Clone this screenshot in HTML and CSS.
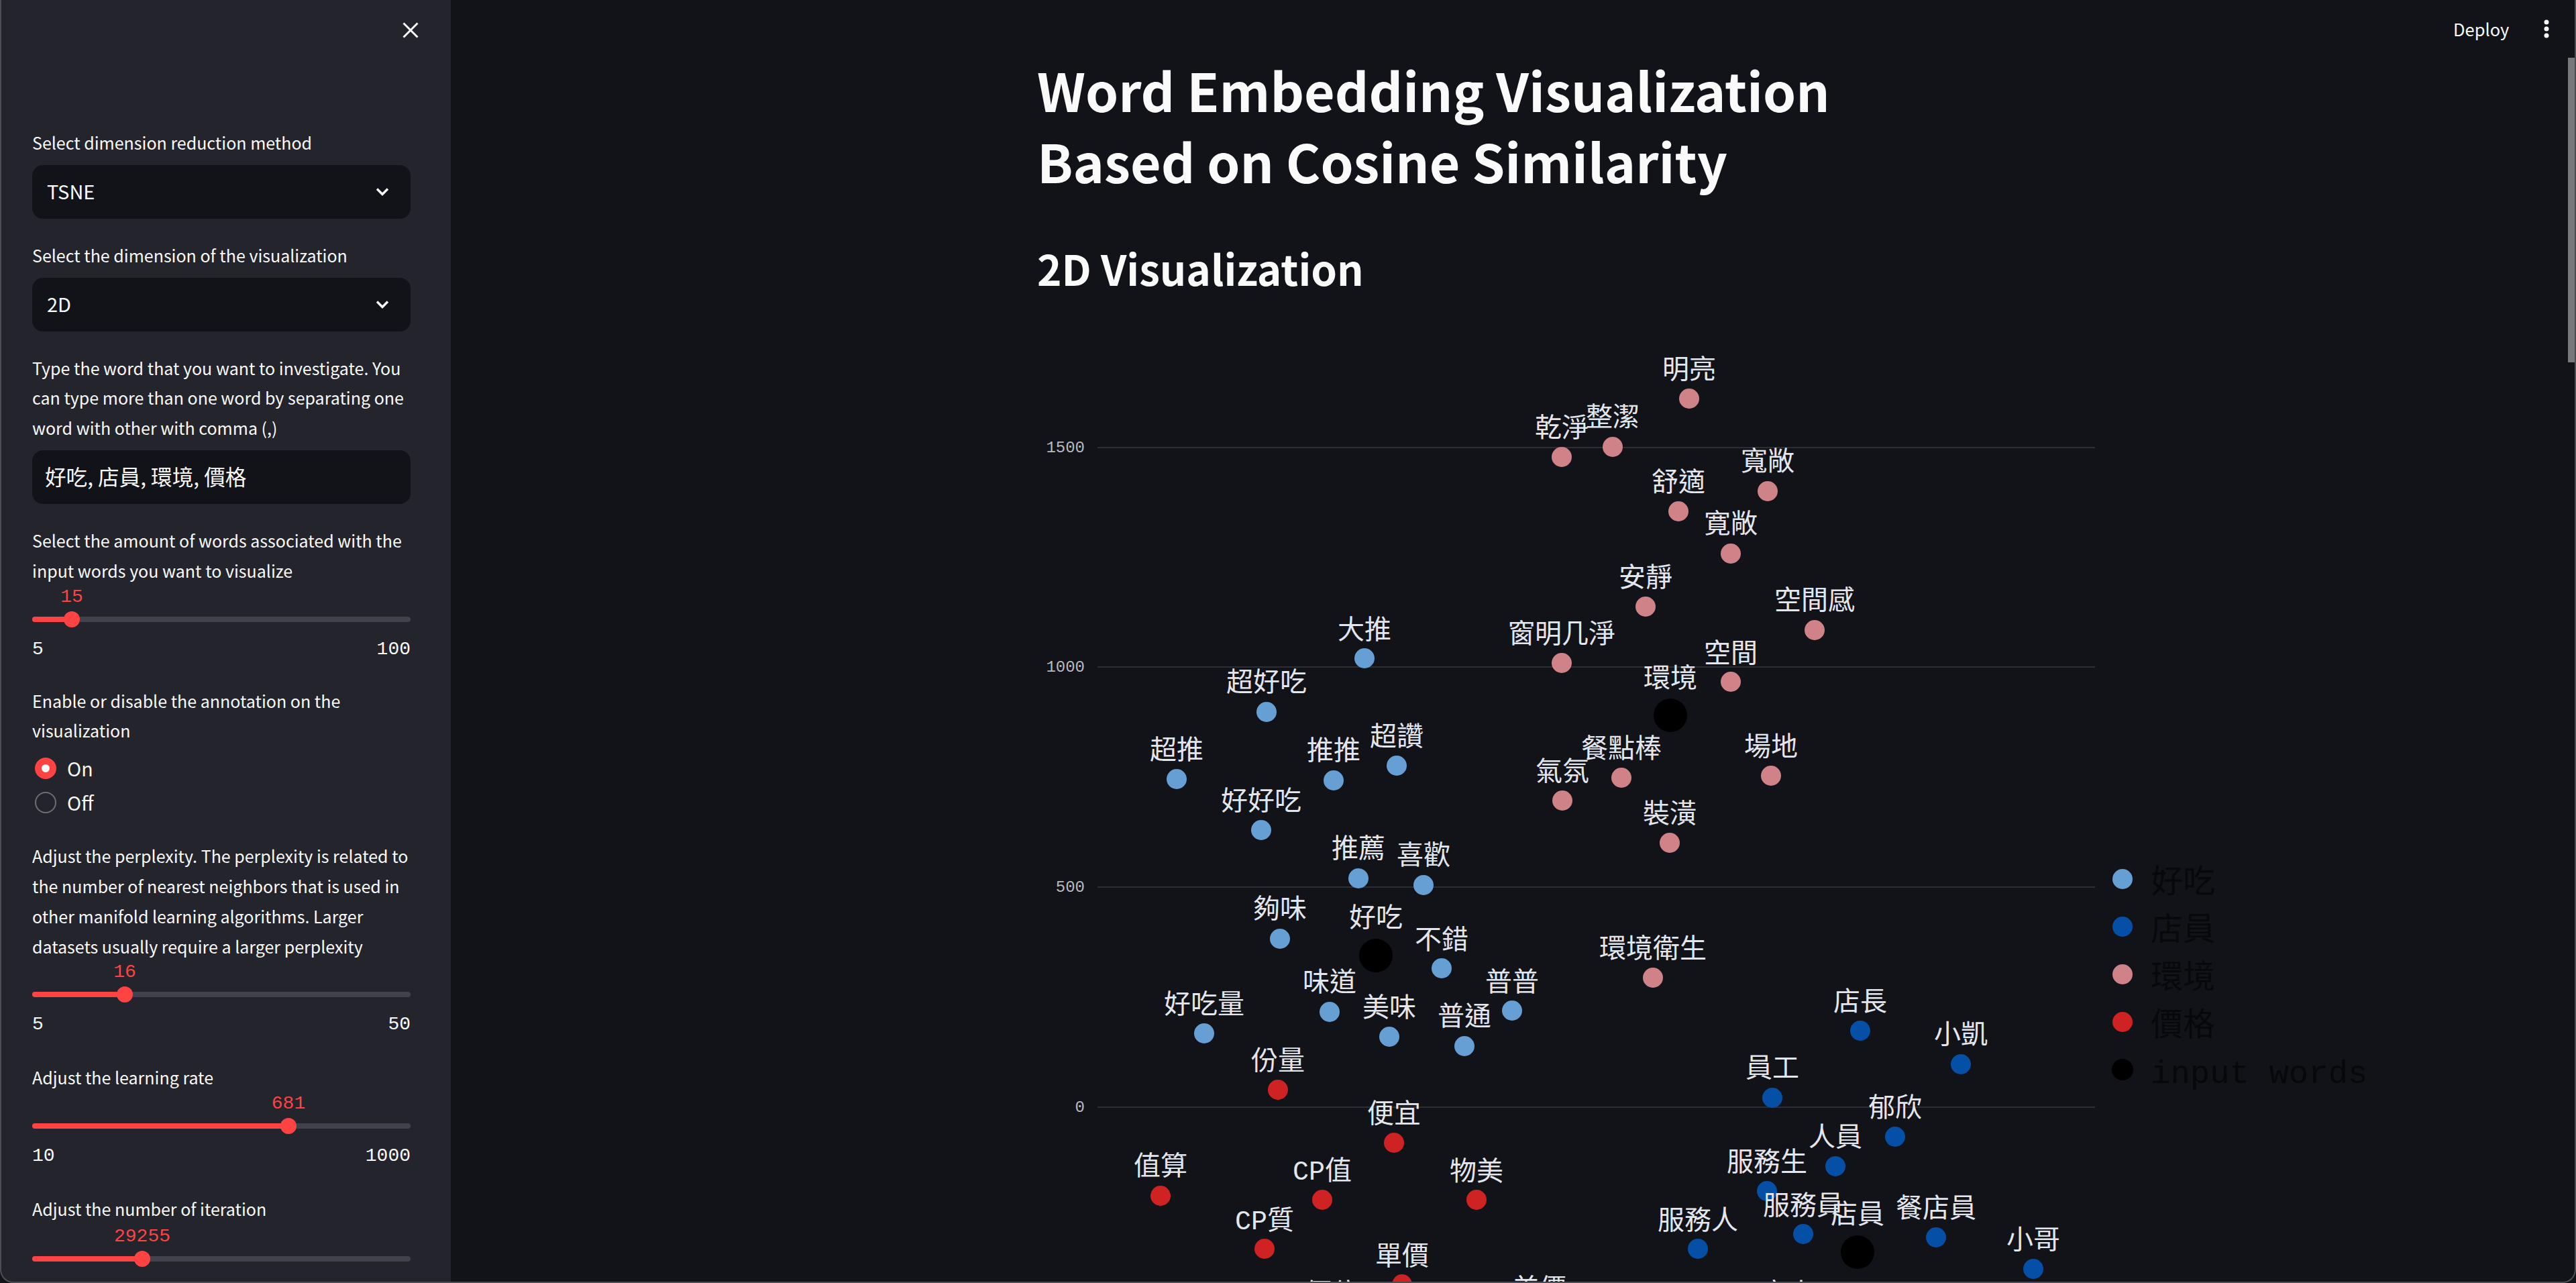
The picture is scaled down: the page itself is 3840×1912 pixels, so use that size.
FILE: index.html
```html
<!DOCTYPE html>
<html lang="zh-Hant">
<head>
<meta charset="utf-8">
<title>Word Embedding Visualization</title>
<link rel="stylesheet" href="styles.css">
</head>
<body>
<div class="app">
  <aside class="sidebar">
    <div class="side-head">
      <svg class="close" viewBox="0 0 24 24"><path d="M1.5 1.5 22.5 22.5M22.5 1.5 1.5 22.5"/></svg>
    </div>
    <div class="widgets">
      <div class="widget">
        <label class="lab">Select dimension reduction method</label>
        <div class="select"><span>TSNE</span><svg class="chev" viewBox="0 0 20 13"><path d="M2 2.5 10 10.5 18 2.5"/></svg></div>
      </div>
      <div class="widget">
        <label class="lab">Select the dimension of the visualization</label>
        <div class="select"><span>2D</span><svg class="chev" viewBox="0 0 20 13"><path d="M2 2.5 10 10.5 18 2.5"/></svg></div>
      </div>
      <div class="widget">
        <label class="lab">Type the word that you want to investigate. You can type more than one word by separating one word with other with comma (,)</label>
        <div class="input">好吃, 店員, 環境, 價格</div>
      </div>
      <div class="widget">
        <label class="lab tight">Select the amount of words associated with the input words you want to visualize</label>
        <div class="slider first">
          <span class="val" style="left:59px">15</span>
          <div class="track"><div class="fill" style="width:59px"></div><div class="thumb" style="left:59px"></div></div>
          <div class="ticks"><span>5</span><span>100</span></div>
        </div>
      </div>
      <div class="widget">
        <label class="lab tight">Enable or disable the annotation on the visualization</label>
        <div class="radios">
          <div class="radio"><span class="dot on"></span><span>On</span></div>
          <div class="radio"><span class="dot"></span><span>Off</span></div>
        </div>
      </div>
      <div class="widget">
        <label class="lab tight">Adjust the perplexity. The perplexity is related to the number of nearest neighbors that is used in other manifold learning algorithms. Larger datasets usually require a larger perplexity</label>
        <div class="slider">
          <span class="val" style="left:138px">16</span>
          <div class="track"><div class="fill" style="width:138px"></div><div class="thumb" style="left:138px"></div></div>
          <div class="ticks"><span>5</span><span>50</span></div>
        </div>
      </div>
      <div class="widget">
        <label class="lab tight">Adjust the learning rate</label>
        <div class="slider">
          <span class="val" style="left:382px">681</span>
          <div class="track"><div class="fill" style="width:382px"></div><div class="thumb" style="left:382px"></div></div>
          <div class="ticks"><span>10</span><span>1000</span></div>
        </div>
      </div>
      <div class="widget">
        <label class="lab tight">Adjust the number of iteration</label>
        <div class="slider last">
          <span class="val" style="left:164px">29255</span>
          <div class="track"><div class="fill" style="width:164px"></div><div class="thumb" style="left:164px"></div></div>
          <div class="ticks"><span>250</span><span>100000</span></div>
        </div>
      </div>
    </div>
  </aside>
  <main class="main">
    <div class="content">
      <h1>Word Embedding Visualization<br>Based on Cosine Similarity</h1>
      <h2>2D Visualization</h2>
      <svg class="chart" viewBox="1546 480 2290 1440">
        <g class="grid">
          <path d="M1636 667H3123M1636 994H3123M1636 1322H3123M1636 1650H3123"/>
        </g>
        <g class="ytick">
          <text x="1617" y="667">1500</text>
          <text x="1617" y="994">1000</text>
          <text x="1617" y="1322">500</text>
          <text x="1617" y="1650">0</text>
        </g>
        <g class="pts env">
          <circle cx="2518" cy="594"/><circle cx="2404" cy="666"/><circle cx="2328" cy="681"/><circle cx="2635" cy="732"/>
          <circle cx="2502" cy="762"/><circle cx="2580" cy="825"/><circle cx="2453" cy="904"/><circle cx="2705" cy="939"/>
          <circle cx="2328" cy="988"/><circle cx="2580" cy="1016"/><circle cx="2640" cy="1156"/><circle cx="2417" cy="1159"/>
          <circle cx="2329" cy="1193"/><circle cx="2489" cy="1256"/><circle cx="2464" cy="1457"/>
        </g>
        <g class="pts food">
          <circle cx="2034" cy="981"/><circle cx="1888" cy="1061"/><circle cx="2082" cy="1141"/><circle cx="1754" cy="1161"/>
          <circle cx="1988" cy="1163"/><circle cx="1880" cy="1237"/><circle cx="2025" cy="1309"/><circle cx="2122" cy="1319"/>
          <circle cx="1908" cy="1399"/><circle cx="2149" cy="1443"/><circle cx="2254" cy="1506"/><circle cx="1982" cy="1508"/>
          <circle cx="1795" cy="1540"/><circle cx="2071" cy="1545"/><circle cx="2183" cy="1559"/>
        </g>
        <g class="pts staff">
          <circle cx="2773" cy="1536"/><circle cx="2923" cy="1586"/><circle cx="2642" cy="1636"/><circle cx="2825" cy="1694"/>
          <circle cx="2736" cy="1738"/><circle cx="2634" cy="1775"/><circle cx="2688" cy="1839"/><circle cx="2886" cy="1844"/>
          <circle cx="2531" cy="1861"/><circle cx="3031" cy="1891"/>
        </g>
        <g class="pts price">
          <circle cx="1905" cy="1624"/><circle cx="2078" cy="1703"/><circle cx="1730" cy="1782"/><circle cx="1971" cy="1788"/>
          <circle cx="2201" cy="1788"/><circle cx="1885" cy="1861"/><circle cx="2090" cy="1914"/>
        </g>
        <g class="pts input">
          <circle cx="2490" cy="1066"/><circle cx="2051" cy="1424"/><circle cx="2769" cy="1866"/>
        </g>
        <g class="labels">
          <text x="2518" y="549">明亮</text><text x="2404" y="620">整潔</text><text x="2328" y="636">乾淨</text><text x="2635" y="686">寬敞</text>
          <text x="2502" y="717">舒適</text><text x="2580" y="779">寛敞</text><text x="2453" y="859">安靜</text><text x="2705" y="893">空間感</text>
          <text x="2328" y="943">窗明几淨</text><text x="2580" y="972">空間</text><text x="2490" y="1009">環境</text><text x="2640" y="1111">場地</text>
          <text x="2417" y="1114">餐點棒</text><text x="2329" y="1148">氣氛</text><text x="2489" y="1211">裝潢</text><text x="2464" y="1412">環境衛生</text>
          <text x="2034" y="937">大推</text><text x="1888" y="1015">超好吃</text><text x="2082" y="1096">超讚</text><text x="1754" y="1116">超推</text>
          <text x="1988" y="1117">推推</text><text x="1880" y="1192">好好吃</text><text x="2025" y="1263">推薦</text><text x="2122" y="1273">喜歡</text>
          <text x="1908" y="1353">夠味</text><text x="2051" y="1366">好吃</text><text x="2149" y="1399">不錯</text><text x="2254" y="1462">普普</text>
          <text x="1982" y="1462">味道</text><text x="1795" y="1495">好吃量</text><text x="2071" y="1500">美味</text><text x="2183" y="1513">普通</text>
          <text x="2773" y="1491">店長</text><text x="2923" y="1540">小凱</text><text x="2642" y="1590">員工</text><text x="2825" y="1649">郁欣</text>
          <text x="2736" y="1693">人員</text><text x="2634" y="1730">服務生</text><text x="2688" y="1795">服務員</text><text x="2886" y="1799">餐店員</text>
          <text x="2769" y="1808">店員</text><text x="2531" y="1817">服務人</text><text x="3031" y="1846">小哥</text>
          <text x="1905" y="1579">份量</text><text x="2078" y="1658">便宜</text><text x="1730" y="1736">值算</text><text x="1971" y="1743">CP值</text>
          <text x="2201" y="1744">物美</text><text x="1885" y="1817">CP質</text><text x="2090" y="1870">單價</text><text x="1985" y="1926">價位</text>
          <text x="2295" y="1919">美價</text><text x="2665" y="1926">客人</text>
        </g>
        <g class="pts food"><circle class="key" cx="3164" cy="1310"/></g>
        <g class="pts staff"><circle class="key" cx="3164" cy="1381"/></g>
        <g class="pts env"><circle class="key" cx="3164" cy="1452"/></g>
        <g class="pts price"><circle class="key" cx="3164" cy="1523"/></g>
        <g class="pts input"><circle class="key-input" cx="3164" cy="1594"/></g>
        <g class="legend">
          <text x="3206" y="1317">好吃</text>
          <text x="3206" y="1388">店員</text>
          <text x="3206" y="1459">環境</text>
          <text x="3206" y="1530">價格</text>
          <text class="legend-mono" x="3206" y="1601">input words</text>
        </g>
      </svg>
    </div>
  </main>
</div>
<header class="topbar">
  <span class="deploy">Deploy</span>
  <svg class="kebab" viewBox="0 0 8 28"><circle cx="4" cy="4" r="3.5"/><circle cx="4" cy="14" r="3.5"/><circle cx="4" cy="24" r="3.5"/></svg>
</header>
<div class="scrollthumb"></div>
<div class="frame"></div>
</body>
</html>
```
FILE: styles.css
```css
* { box-sizing: border-box; }
html, body { margin: 0; height: 100%; overflow: hidden; background: #111319; }
body {
  font-family: "Noto Sans CJK TC", "Noto Sans", sans-serif;
  color: #fafafa;
  -webkit-font-smoothing: antialiased;
}
.app { display: flex; height: 1912px; overflow: hidden; }

.sidebar { flex: 0 0 672px; height: 100%; background: #23242c; padding: 0 60px 0 48px; overflow: hidden; }
.side-head { height: 190px; padding-top: 33px; display: flex; justify-content: flex-end; }
.close { width: 24px; height: 24px; margin-right: -12px; fill: none; stroke: #fafafa; stroke-width: 3; }
.widgets { display: flex; flex-direction: column; gap: 32px; }
.lab { display: block; font-size: 25px; line-height: 44.8px; margin-bottom: 11px; }
.lab.tight { margin-bottom: 0; }
.select { height: 80px; border-radius: 16px; background: #111319; display: flex; align-items: center; justify-content: space-between; padding: 0 32px 0 22px; font-size: 29px; }
.select span { padding-bottom: 4px; }
.chev { width: 20px; height: 13px; fill: none; stroke: #fafafa; stroke-width: 3.4; }
.input { height: 80px; border-radius: 16px; background: #111319; display: flex; align-items: center; padding: 0 19px 4px; font-size: 31.6px; }

.slider { position: relative; height: 119px; font-family: "Liberation Mono", monospace; font-size: 28px; }
.slider.first { height: 117px; }
.slider.last { margin-top: 2px; }
.val { position: absolute; top: 0; transform: translateX(-50%); color: #ff4343; line-height: 34px; white-space: nowrap; }
.track { position: absolute; top: 46px; left: 0; right: 0; height: 8px; border-radius: 4px; background: #41424d; }
.fill { height: 100%; border-radius: 4px; background: #ff4343; }
.thumb { position: absolute; top: -8px; width: 24px; height: 24px; margin-left: -12px; border-radius: 50%; background: #ff4343; }
.ticks { position: absolute; top: 78px; left: 0; right: 0; display: flex; justify-content: space-between; line-height: 34px; }
.slider.last .ticks { top: 82px; }

.radios { margin-top: 8px; }
.radio { height: 51px; display: flex; align-items: center; gap: 16px; padding-left: 4px; font-size: 28.5px; }
.dot { width: 32px; height: 32px; border-radius: 50%; border: 2px solid #6d6e74; }
.dot.on { border: 10px solid #ff4343; background: #fafafa; }

.main { flex: 1 1 auto; min-width: 0; overflow: hidden; }
.content { width: 1420px; margin-left: 874px; padding-top: 80px; }
h1 { margin: 0; font-size: 78.7px; line-height: 106px; font-weight: 700; white-space: nowrap; }
h2 { margin: 64px 0 38px; font-size: 62px; line-height: 86px; font-weight: 700; white-space: nowrap; }
.chart { display: block; width: 2290px; height: 1440px; overflow: hidden; font-family: "Liberation Mono", "Noto Sans CJK TC", monospace; }

.grid path { fill: none; stroke: #2c2d35; stroke-width: 2; }
.ytick text { font-size: 24px; fill: #b9bac0; text-anchor: end; dominant-baseline: central; }
.pts circle { r: 15px; }
.pts.env { fill: #cf8388; }
.pts.food { fill: #659fd4; }
.pts.staff { fill: #0550a6; }
.pts.price { fill: #ce2322; }
.pts.input { fill: #000; }
.pts.input circle { r: 25px; }
.pts.input circle.key-input { r: 16px; }
.labels text { font-size: 40px; fill: #e4e6ee; text-anchor: middle; dominant-baseline: central; transform: translateY(4px); }
.legend text { font-size: 48px; fill: #07080b; dominant-baseline: central; }
.legend .legend-mono { font-size: 49px; }

.topbar { position: absolute; top: 0; right: 0; width: 300px; height: 86px; }
.deploy { position: absolute; left: 117px; top: 22px; font-size: 25.5px; line-height: 42px; }
.kebab { position: absolute; left: 252px; top: 29px; width: 8px; height: 28px; fill: #fafafa; }
.scrollthumb { position: absolute; top: 86px; right: 2px; width: 10px; height: 454px; background: #77787c; }
.frame { position: absolute; inset: 0; pointer-events: none; border: 2px solid #4d4e54; border-top: 0; border-radius: 0 0 20px 20px; box-shadow: 0 0 0 20px #111319; }
```
